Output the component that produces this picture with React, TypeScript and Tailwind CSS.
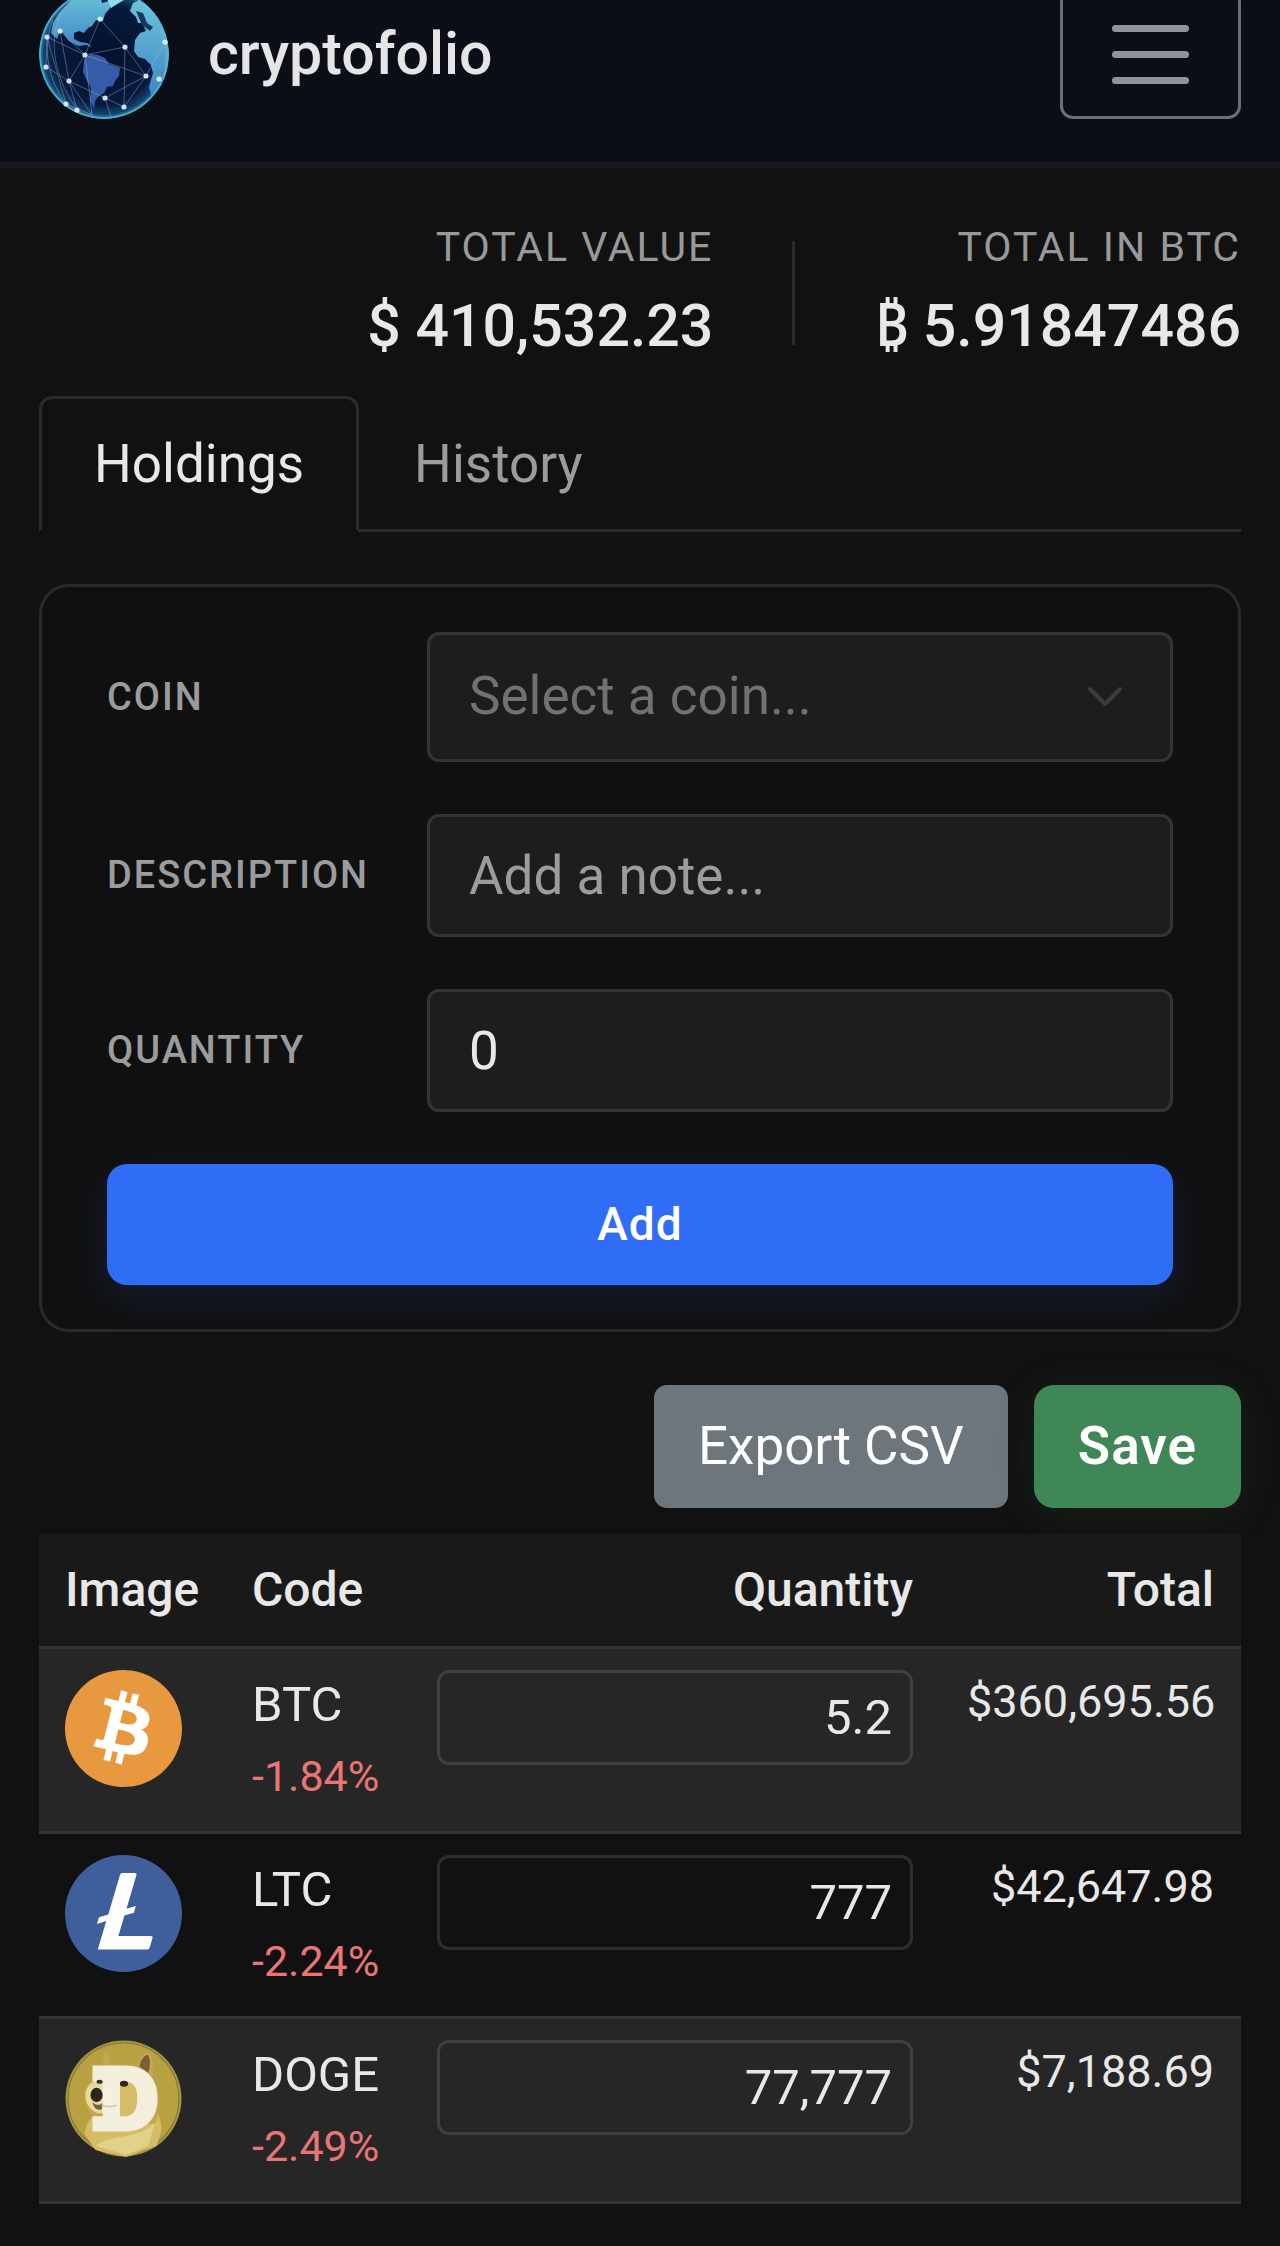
import { useState } from 'react'
import { SiBitcoin, SiLitecoin } from 'react-icons/si'

const globeNodes = [
  [61, 30], [86, 58], [46, 66], [30, 92], [107, 87], [66, 109], [85, 118],
  [8, 48], [7, 78], [21, 42], [38, 121], [126, 53], [27, 115], [120, 90],
]

function Globe() {
  return (
    <svg viewBox="0 0 130 130" className="h-[130px] w-[130px] shrink-0" aria-hidden="true">
      <defs>
        <radialGradient id="sea" cx="50%" cy="50%" r="50%">
          <stop offset="0%" stopColor="#04102c" />
          <stop offset="78%" stopColor="#071a3d" />
          <stop offset="93%" stopColor="#14446f" />
          <stop offset="100%" stopColor="#3d9cc4" />
        </radialGradient>
        <linearGradient id="land" x1="0" y1="0" x2="0" y2="1">
          <stop offset="0%" stopColor="#6cc4dc" />
          <stop offset="100%" stopColor="#3f87c4" />
        </linearGradient>
        <clipPath id="disc">
          <circle cx="65" cy="65" r="65" />
        </clipPath>
      </defs>
      <g clipPath="url(#disc)">
        <circle cx="65" cy="65" r="65" fill="url(#sea)" />
        <path
          d="M14 34 20 24 35 8 61 2 63 14 70 12 72 18 66 25 64 32 57 31 53 37 49 39 45 44 40 42 35 44 35 50 41 53 48 54 53 58 47 56 39 57 30 52 24 44 21 42 18 50 12 44Z"
          fill="url(#land)"
        />
        <path d="M67 2 86 3 90 8 80 14 72 19 69 12Z" fill="#8fdde6" />
        <path
          d="M94 14 104 10 118 28 127 46 130 65 128 84 120 102 112 106 110 98 114 84 112 76 106 70 99 68 95 62 96 51 101 44 107 42 103 34 99 34 97 28 91 22Z"
          fill="url(#land)"
        />
        <path d="M97 22 104 24 108 34 114 38 111 42 103 36Z" fill="#12395c" />
        <path
          d="M45 71 51 65 59 66 66 69 70 75 81 79 80 87 76 92 74 97 68 98 65 104 59 108 56 112 55 120 51 111 52 99 48 92 44 83Z"
          fill="#345ca8"
        />
        <g fill="none" stroke="#a9bfdd" strokeOpacity="0.4" strokeWidth="1">
          <path d="M61 30 86 58 46 66 61 30M46 66 30 92 7 78 8 48 46 66 21 42M86 58 107 87 66 109 30 92M86 58 85 118 66 109M46 66 107 87M107 87 85 118M30 92 38 121M46 66 53 126 30 92M21 42 30 92M8 48 27 115 53 126M126 53 107 87M66 109 72 128" />
          <path d="M14 30C2 60 10 92 27 115M22 24C6 56 20 102 45 128M120 102C128 88 130 60 122 40" />
        </g>
        <circle cx="65" cy="65" r="64" fill="none" stroke="#5cc3dd" strokeOpacity="0.6" strokeWidth="2" />
      </g>
      {globeNodes.map(([x, y]) => (
        <circle key={`${x}-${y}`} cx={x} cy={y} r="2.6" fill="#dff1ff" fillOpacity="0.9" />
      ))}
    </svg>
  )
}

function BitcoinLogo() {
  return (
    <div className="h-[117px] w-[117px] rounded-full bg-[radial-gradient(circle,#fff_60%,transparent_61%)]">
      <SiBitcoin className="h-full w-full text-[#e8993f]" aria-hidden="true" />
    </div>
  )
}

function LitecoinLogo() {
  return (
    <div className="h-[117px] w-[117px] rounded-full bg-[radial-gradient(circle,#fff_60%,transparent_61%)]">
      <SiLitecoin className="h-full w-full text-[#3f5f9c]" aria-hidden="true" />
    </div>
  )
}

function DogecoinLogo() {
  return (
    <svg viewBox="0 0 115 115" className="h-[117px] w-[117px]" aria-hidden="true">
      <defs>
        <clipPath id="coin">
          <circle cx="57.5" cy="57.5" r="54" />
        </clipPath>
      </defs>
      <circle cx="57.5" cy="57.5" r="57" fill="#a59545" />
      <circle cx="57.5" cy="57.5" r="54.5" fill="#b8a140" stroke="#837836" strokeWidth="1" />
      <g clipPath="url(#coin)">
        <path d="M19 92C22 78 26 76 30 72L90 70C98 84 94 94 90 104L60 115 30 108Z" fill="#d5bc67" />
        <path d="M30 104C44 92 72 98 88 82L82 104 60 113Z" fill="#e2d189" />
        <path d="M37 24 38 11C42 11 45 17 45 24L70 25C74 16 78 11 82 12 87 16 87 28 86 36 94 48 95 72 88 82L34 84C28 76 18 66 19 52 21 44 26 40 30 36Z" fill="#c6a552" />
        <path d="M73 26C75 18 79 14 82 15 84 20 84 26 82 32Z" fill="#7a6038" />
        <path d="M20 54C20 46 26 41 32 40L46 48 46 72 32 72C24 68 20 62 20 54Z" fill="#ead99a" />
        <path d="M54 41H66C73 48 73 66 66 75H54Z" fill="#d3bd69" />
      </g>
      <path
        fillRule="evenodd"
        d="M27 25H58C80 25 91 38 91 57 91 77 80 90 58 90H27V75H37V41H27ZM54 41V75H59C68 75 71 68 71 57 71 47 68 41 59 41Z"
        fill="#f7f2e6"
        fillOpacity="0.94"
      />
      <ellipse cx="31" cy="54" rx="6" ry="7" fill="#29251f" />
      <path d="M27 61C30 65 35 64 37 62L36 68C32 70 28 67 27 61Z" fill="#6d604b" />
      <ellipse cx="58" cy="43" rx="4" ry="3" fill="#2b261d" />
      <ellipse cx="34" cy="41" rx="3" ry="2" fill="#3b3325" />
      <path d="M36 64Q44 67 51 64" fill="none" stroke="#cbc6b8" strokeWidth="1.5" />
    </svg>
  )
}

const holdings = [
  { code: 'BTC', change: '-1.84%', quantity: '5.2', total: '$360,695.56', Logo: BitcoinLogo },
  { code: 'LTC', change: '-2.24%', quantity: '777', total: '$42,647.98', Logo: LitecoinLogo },
  { code: 'DOGE', change: '-2.49%', quantity: '77,777', total: '$7,188.69', Logo: DogecoinLogo },
]

const labelClass = 'text-[38px] font-medium tracking-[2px] text-[#9a9c9e]'
const fieldClass =
  'w-full rounded-[12px] border-[3px] border-[#343434] bg-[#1d1d1d] px-[39px] text-[53px] outline-none'

function Header() {
  return (
    <header className="flex h-[168px] items-end justify-between border-b-[6px] border-[#17181c] bg-[#0b0e16] px-[39px] pb-[43px]">
      <a href="#" className="flex items-center gap-[39px]">
        <Globe />
        <span className="text-[59px] font-medium text-[#e5e5e8]">cryptofolio</span>
      </a>
      <button
        type="button"
        aria-label="Toggle navigation"
        className="flex h-[130px] w-[181px] shrink-0 flex-col items-center justify-center gap-[19px] rounded-[13px] border-[3px] border-[#6d6e71]"
      >
        <span className="h-[7px] w-[77px] rounded-full bg-[#929398]" />
        <span className="h-[7px] w-[77px] rounded-full bg-[#929398]" />
        <span className="h-[7px] w-[77px] rounded-full bg-[#929398]" />
      </button>
    </header>
  )
}

function Totals() {
  return (
    <div className="flex items-start justify-end pt-[49px] text-right">
      <div>
        <div className="text-[41px] leading-[60px] tracking-[2px] text-[#98999a]">TOTAL VALUE</div>
        <div className="text-[59px] leading-[98px] font-medium text-[#e8e8e8]">$ 410,532.23</div>
      </div>
      <div className="mx-[79px] mt-[24px] h-[104px] w-[3px] bg-[#2b2b2b]" />
      <div>
        <div className="text-[41px] leading-[60px] tracking-[2px] text-[#98999a]">TOTAL IN BTC</div>
        <div className="text-[59px] leading-[98px] font-medium text-[#e8e8e8]">₿ 5.91847486</div>
      </div>
    </div>
  )
}

function HoldingForm() {
  const [quantity, setQuantity] = useState('0')

  return (
    <form
      onSubmit={(e) => e.preventDefault()}
      className="mt-[52px] grid grid-cols-[320px_1fr] items-center gap-y-[52px] rounded-[30px] border-[3px] border-[#2a2a2a] bg-[#101010] px-[65px] pt-[45px] pb-[44px]"
    >
      <label htmlFor="coin" className={labelClass}>COIN</label>
      <div className="relative">
        <select
          id="coin"
          defaultValue=""
          className={`${fieldClass} block h-[130px] appearance-none text-[#717171]`}
        >
          <option value="">Select a coin...</option>
          <option value="btc">BTC</option>
          <option value="ltc">LTC</option>
          <option value="doge">DOGE</option>
        </select>
        <svg
          viewBox="0 0 36 22"
          className="pointer-events-none absolute top-[54px] right-[50px] h-[22px] w-[36px]"
          fill="none"
          stroke="#383d41"
          strokeWidth="4"
          strokeLinecap="round"
          strokeLinejoin="round"
          aria-hidden="true"
        >
          <path d="M3 3 18 18 33 3" />
        </svg>
      </div>

      <label htmlFor="description" className={labelClass}>DESCRIPTION</label>
      <input
        id="description"
        type="text"
        placeholder="Add a note..."
        className={`${fieldClass} h-[123px] text-[#e8e8e8] placeholder:text-[#9a9c9e]`}
      />

      <label htmlFor="quantity" className={labelClass}>QUANTITY</label>
      <input
        id="quantity"
        type="text"
        value={quantity}
        onChange={(e) => setQuantity(e.target.value)}
        className={`${fieldClass} h-[123px] text-[#e8e8e8]`}
      />

      <button
        type="submit"
        className="col-span-2 h-[121px] rounded-[20px] bg-[#306df6] text-[46px] font-medium tracking-[1px] text-white shadow-[0_13px_40px_rgba(48,109,246,0.15)]"
      >
        Add
      </button>
    </form>
  )
}

function HoldingsTable() {
  return (
    <table className="mt-[26px] w-full table-fixed border-collapse text-[#e8e8e8]">
      <thead>
        <tr className="h-[113px] border-b-[3px] border-[#343434] bg-[#191919] text-[48px] leading-[70px]">
          <th className="w-[186px] px-[26px] text-left font-medium">Image</th>
          <th className="w-[185px] px-[27px] text-left font-medium">Code</th>
          <th className="px-[27px] text-right font-medium">Quantity</th>
          <th className="w-[301px] px-[27px] text-right font-medium">Total</th>
        </tr>
      </thead>
      <tbody>
        {holdings.map(({ code, change, quantity, total, Logo }) => (
          <tr key={code} className="h-[185px] border-b-[3px] border-[#343434] align-top odd:bg-[#262626]">
            <td className="px-[26px] pt-[21px]">
              <Logo />
            </td>
            <td className="pt-[21px] pl-[27px]">
              <div className="text-[49px] leading-[70px]">{code}</div>
              <div className="text-[43px] leading-[72px] text-[#ea7575]">{change}</div>
            </td>
            <td className="px-[27px] pt-[21px]">
              <input
                type="text"
                aria-label={`${code} quantity`}
                defaultValue={quantity}
                className="block h-[95px] w-full rounded-[12px] border-[3px] border-white/12 bg-transparent px-[18px] text-right text-[49px] outline-none"
              />
            </td>
            <td className="px-[27px] pt-[21px] text-right text-[45px] leading-[64px]">{total}</td>
          </tr>
        ))}
      </tbody>
    </table>
  )
}

function App() {
  return (
    <div className="min-h-screen bg-[#111111] font-['Roboto','Noto_Sans',sans-serif]">
      <Header />
      <main className="px-[39px]">
        <Totals />
        <div role="tablist" className="mt-[21px] flex border-b-[3px] border-[#2b2b2b] text-[53px] leading-[80px]">
          <button
            type="button"
            role="tab"
            aria-selected="true"
            className="-mb-[3px] rounded-t-[13px] border-[3px] border-[#2b2b2b] border-b-[#111111] px-[52px] py-[25px] text-[#e8e8e8]"
          >
            Holdings
          </button>
          <button type="button" role="tab" aria-selected="false" className="px-[55px] pt-[3px] text-[#9a9c9e]">
            History
          </button>
        </div>
        <HoldingForm />
        <div className="mt-[53px] flex justify-end gap-[26px]">
          <button type="button" className="h-[123px] rounded-[13px] bg-[#6d757d] px-[44px] text-[53px] text-white">
            Export CSV
          </button>
          <button
            type="button"
            className="h-[123px] rounded-[20px] bg-[#3f8757] px-[44px] text-[53px] font-semibold tracking-[1px] text-white shadow-[0_6px_40px_rgba(63,135,87,0.14)]"
          >
            Save
          </button>
        </div>
        <HoldingsTable />
      </main>
    </div>
  )
}

export default App
